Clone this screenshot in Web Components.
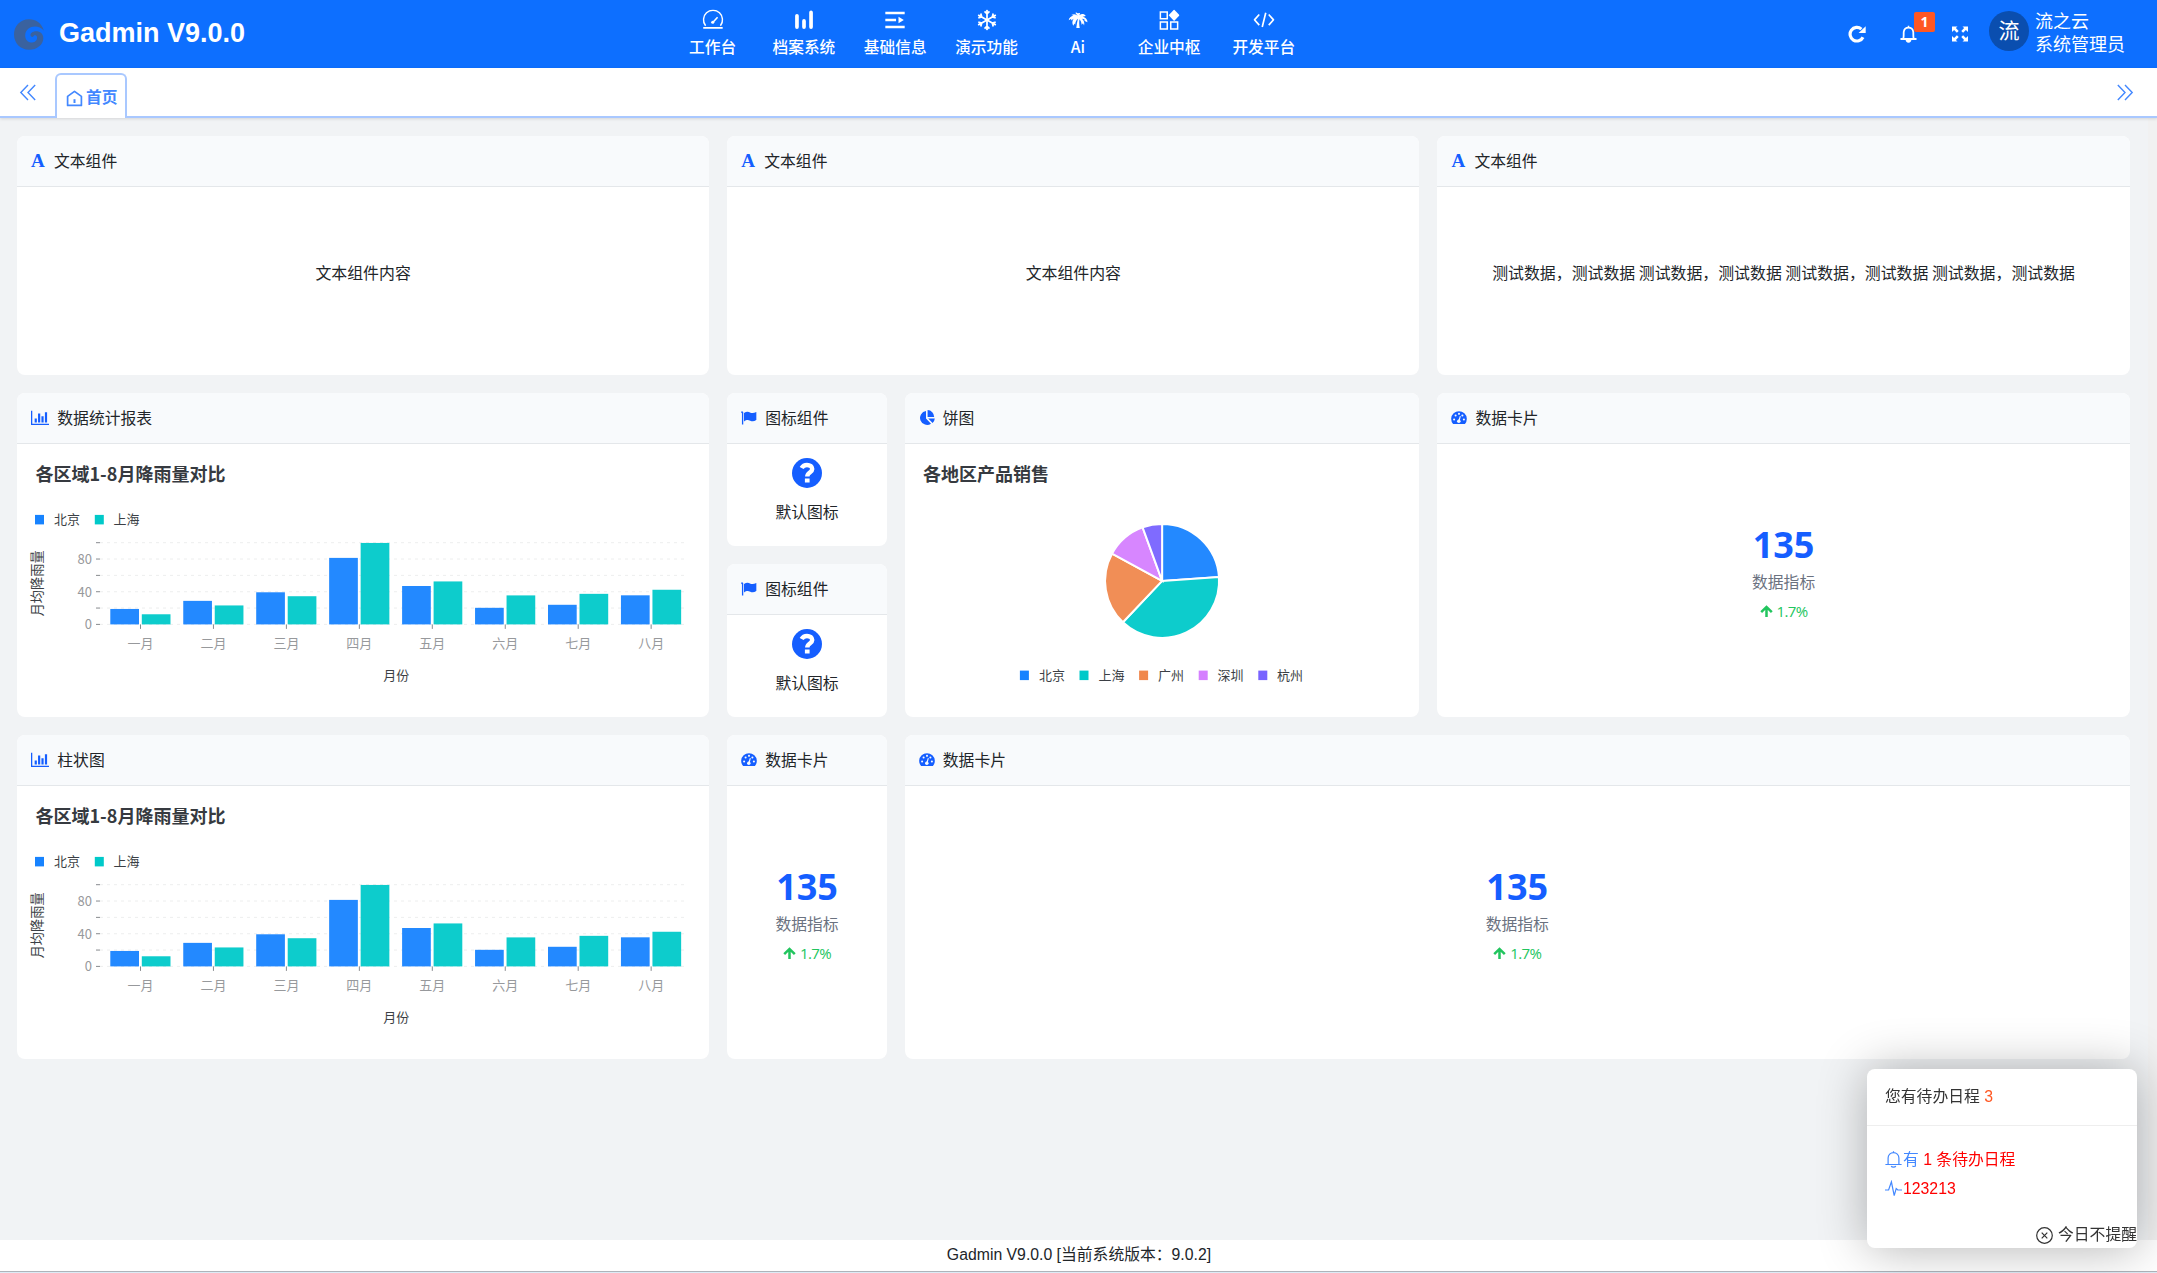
<!DOCTYPE html>
<html lang="zh-CN">
<head>
<meta charset="utf-8">
<title>Gadmin V9.0.0</title>
<style>
html,body{margin:0;height:100%;overflow:hidden}
body{font:16px/24px "Liberation Sans","Noto Sans CJK SC",sans-serif;color:#212529;background:#f1f3f5}
</style>
</head>
<body>
<g-app></g-app>
<script>
const CJK = '"Noto Sans CJK SC",sans-serif';
function define(name, render) {
  customElements.define(name, class extends HTMLElement {
    connectedCallback() {
      if (this.shadowRoot) return;
      this.attachShadow({ mode: 'open' }).innerHTML = render(this);
    }
  });
}
const line = (d, w = 2, x = '') => `<path d="${d}" fill="none" stroke="currentColor" stroke-width="${w}" ${x}/>`;
const fill = d => `<path d="${d}" fill="currentColor"/>`;
const flake = () => [0, 60, 120, 180, 240, 300].map(a => `<g transform="rotate(${a} 12 12)">${line('M12 12V.4M9.2 2.2 12 5 14.8 2.2', 2)}</g>`).join('');
const ICONS = {
  gauge: ['0 0 24 24', line('M3.6 18.5A10.8 10.8 0 1 1 20.4 18.5', 1.7) + line('M.9 21H23', 2) + line('M12 14.5 17.2 8.8', 1.8) + '<circle cx="11.7" cy="14.6" r="1.8" fill="currentColor"/>'],
  bars: ['0 0 24 24', line('M4 7.2V20M12 13V20M20 3.4V20', 4.2, 'stroke-linecap="round"')],
  indent: ['0 0 24 24', line('M1 4H23M1 12H13.2M1 20H23', 2.7) + fill('M16 8.2 22 12 16 15.8z')],
  snow: ['0 0 24 24', flake()],
  palm: ['0 0 24 24', fill('M12.6 8.2C10.8 5.4 7.2 4.4 4.4 6.4L6.8 6.8C4.2 7.6 1.6 9.2 1.5 12.2L4.3 10.5 4.2 12.7 7 10.6C5.2 13.3 5.2 16 6.6 18.6L8 15.9 8.8 17.5C9 14.2 10 12 12 10.6 11 14.2 10.4 18 10.1 21.2H14C13.3 17.5 13.2 14 13.7 11.2 15.2 13 16 15 16.1 17.5L17.7 15.7 18.9 18.2C19.8 15.1 18.6 12.4 16.4 10.6L19.2 11.2 19.6 13 22.7 14.6C22.9 11.3 20.6 8.8 17.2 8.2L20.8 7.4C19 4.9 16.1 4.7 13.7 6.5L14.4 4 11.6 4.4 9.5 3.3 9.4 4.5z')],
  blocks: ['0 0 24 24', line('M2.2 2.8H10V10.6H2.2zM2.2 14.4H10V22.2H2.2zM14 14.4H21.8V22.2H14z', 1.7) + fill('M17.8 0 24 6.6 17.8 13.2 11.6 6.6z')],
  code: ['0 0 24 24', line('M6.6 5.8 1.2 11.8 6.6 17.8M17.4 5.8 22.8 11.8 17.4 17.8M14 3.8 10 20', 1.9)],
  refresh: ['0 0 18 18', line('M15 12.2A6.8 6.8 0 1 1 13.4 4.1', 3.2) + fill('M17.7 1.2V8H10.6z')],
  bell: ['0 0 18 18', line('M3.4 14C4.4 11 3.6 9 4 6.5A5.05 5.05 0 0 1 14 6.5C14.4 9 13.6 11 14.6 14M.5 14.3H17.5', 1.9) + fill('M6 15.2H12A3 3 0 0 1 6 15.2zM8.2.2H9.8V2H8.2z')],
  full: ['0 0 16 16', fill('M0 .5H5.5L3.9 2.1 6.7 4.9 4.9 6.7 2.1 3.9 0 6zM16 .5H10.5L12.1 2.1 9.3 4.9 11.1 6.7 13.9 3.9 16 6zM0 15.5H5.5L3.9 13.9 6.7 11.1 4.9 9.3 2.1 12.1 0 10zM16 15.5H10.5L12.1 13.9 9.3 11.1 11.1 9.3 13.9 12.1 16 10z')],
  left: ['0 0 18 18', line('M9 1 1.4 9 9 17M16.6 1 9 9 16.6 17', 1.5)],
  right: ['0 0 18 18', line('M9 1 16.6 9 9 17M1.4 1 9 9 1.4 17', 1.5)],
  home: ['0 0 17 17', line('M1.6 6.4 8.5 1.4 15.4 6.4V15.4H1.6z', 1.7, 'stroke-linejoin="round"') + line('M8.5 9.2V13', 2)],
  chart: ['0 0 20 16', fill('M0 0H1.4V14.2H20V15.6H0zM4 8.6H6.4V13H4zM7.7 3.2H10.1V13H7.7zM11.4 6H13.8V13H11.4zM15.2 1.6H17.6V13H15.2z')],
  flag: ['0 0 17 16', fill('M.4 1.2A1.2 1.2 0 0 1 2.4 2.1V14.8H1V2.9A1.2 1.2 0 0 1 .4 1.2zM3.2 2.6C6 .9 8 1.3 10 2.3 12 3.2 13.8 2.9 16.3 1.6V10.2C14 11.6 12.2 12.1 9.8 10.9 7.6 9.9 5.8 9.9 3.2 11.6z')],
  pie: ['0 0 16 16', fill('M7 1V8.6L12 13.7A7 7 0 1 1 7 1zM8.6 0A7 7 0 0 1 15.2 7H8.6zM9.2 8.4H15.8A7 7 0 0 1 13.6 12.9z')],
  dash: ['0 0 17 16', '<path fill="currentColor" d="M2.2 14.4A8.3 8.3 0 1 1 14.8 14.4Z"/><g fill="#f8fafc"><circle cx="3.3" cy="9.6" r="1.1"/><circle cx="4.9" cy="5.4" r="1.1"/><circle cx="8.5" cy="3.6" r="1.1"/><circle cx="12.1" cy="5.4" r="1.1"/><circle cx="13.7" cy="9.6" r="1.1"/><circle cx="8.3" cy="11.4" r="1.9"/><path d="M7.7 11 9.4 5.8 10.4 6.1 9.2 11.2z"/></g>'],
  question: ['0 0 30 30', '<circle cx="15" cy="15" r="15" fill="#155eff"/><path d="M9.6 10C10.8 7.9 12.5 6.9 15 6.9 18 6.9 20.2 8.7 20.2 11.1 20.2 14.7 15.3 14.4 15.3 18.4" fill="none" stroke="#fff" stroke-width="4.5"/><path d="M12.9 20.4H17.6V24.6H12.9z" fill="#fff"/>'],
  up: ['0 0 13 12', line('M6.5 12V2M1.2 7.2 6.5 1.9 11.8 7.2', 2.5)],
  alarm: ['0 0 17 17', line('M3.1 13.3V7A5.4 5.4 0 0 1 13.9 7V13.3M.4 13.5H16.6M6.2 15A2.4 1.6 0 0 0 10.8 15M8.5.3V1.6', 1.2)],
  pulse: ['0 0 17 17', line('M0 10H3.6L6.4 1.8 9.2 15.6 11.2 8.6 12.8 10H17', 1.2)],
  close: ['0 0 17 17', line('M5.7 5.7 11.3 11.3M11.3 5.7 5.7 11.3', 1.2) + '<circle cx="8.5" cy="8.5" r="7.8" fill="none" stroke="currentColor" stroke-width="1.2"/>'],
  logo: ['0 0 30 31', fill('M29.8 11.5C27.4 3.8 21.6.2 15 .3 6 .5 0 7 0 15.6 0 24.4 6.6 30.8 15 30.8 23.2 30.8 29.3 25.6 29.3 19 29.3 14.8 26 12.2 22.2 12.2 18.4 12.2 15.9 14.4 16.6 16.8 17.2 18.4 19.4 18.3 20 16.6 20.4 15.8 22.4 16 22.9 17.6 23.8 20.6 21.4 23.4 18.2 23.6 14.2 23.8 11 20.6 11.2 16.2 11.5 10.6 16 7.6 21 7.6 24.4 7.6 27.4 9 29.8 11.5z')],
};
define('g-icon', el => {
  const n = el.getAttribute('name'), w = el.getAttribute('w') || 16, h = el.getAttribute('h') || w;
  return `<style>:host{display:block;flex:none;width:${w}px;height:${h}px}svg{display:block;width:100%;height:100%}
  b{display:block;font:bold 19px/16px "Liberation Serif",serif}</style>` +
    (n === 'font' ? '<b>A</b>' : `<svg viewBox="${ICONS[n][0]}">${ICONS[n][1]}</svg>`);
});

define('g-nav-item', el => `<style>
:host{display:flex;flex-direction:column;align-items:center;width:${el.getAttribute('w') || 91.3}px;padding-top:8px;font:500 15.7px/24px ${CJK};color:#fff}
span{margin-top:3px}</style><g-icon name="${el.getAttribute('icon')}" w="24" style="transform:scale(.88)"></g-icon><span><slot></slot></span>`);

define('g-header', () => `<style>
:host{display:flex;height:68px;background:#0d6fff;color:#fff;justify-content:space-between}
.brand{display:flex;align-items:center;width:653px;padding-left:14px;gap:15px}
.brand g-icon{color:#3a629f}.brand strong{font:bold 27px/40px "Liberation Sans";margin-bottom:3px}
nav{display:flex;flex:1}
.tools{display:flex;width:309px}
.ic{padding-top:25px}
.bell{position:relative;margin-left:34px}
.badge{position:absolute;left:14px;top:12px;width:21px;height:20px;border-radius:2px;background:#ff5722;font:bold 14px/20px "Open Sans";text-align:center}
.full{margin-left:35px;padding-top:26px}
.avatar{width:40px;height:40px;border-radius:50%;background:#0a4eaf;margin:11px 6px 0 21px;font:21px/37px ${CJK};text-align:center}
.who{font:18px/23px ${CJK};padding-top:9px;white-space:nowrap}
</style>
<div class="brand"><g-icon name="logo" w="30" h="31"></g-icon><strong>Gadmin V9.0.0</strong></div>
<nav><g-nav-item icon="gauge">工作台</g-nav-item><g-nav-item icon="bars">档案系统</g-nav-item><g-nav-item icon="indent">基础信息</g-nav-item><g-nav-item icon="snow">演示功能</g-nav-item><g-nav-item icon="palm">Ai</g-nav-item><g-nav-item icon="blocks">企业中枢</g-nav-item><g-nav-item icon="code" w="98">开发平台</g-nav-item></nav>
<div class="tools"><div class="ic"><g-icon name="refresh" w="18"></g-icon></div>
<div class="ic bell"><g-icon name="bell" w="17" h="18"></g-icon><span class="badge">1</span></div>
<div class="full"><g-icon name="full" w="16"></g-icon></div>
<div class="avatar">流</div><div class="who">流之云<br>系统管理员</div></div>`);

define('g-tabs', () => `<style>
:host{display:flex;box-sizing:border-box;height:50px;background:#fff;border-bottom:2px solid #a9c8ff;box-shadow:0 1px 3px rgba(0,0,0,.12);color:#4388ff;align-items:flex-end;position:relative}
.l{padding:0 18px 15px 19px}.r{margin-left:auto;padding:0 23px 15px 0}
.tab{display:flex;box-sizing:border-box;width:72px;height:45px;margin-bottom:-2px;border:2px solid #a9c8ff;border-bottom:0;border-radius:6px 6px 0 0;background:#fff;padding:3px 0 0 9px;gap:3px;align-items:center;font:bold 15.7px/24px ${CJK};white-space:nowrap}
.tab span{margin-top:-2px}
</style><div class="l"><g-icon name="left" w="18" h="17"></g-icon></div><div class="tab"><g-icon name="home" w="17"></g-icon><span>首页</span></div><div class="r"><g-icon name="right" w="18" h="17"></g-icon></div>`);

define('g-card', el => `<style>
:host{display:flex;flex-direction:column;min-width:0;min-height:0;background:#fff;border-radius:8px;overflow:hidden;grid-column:${el.getAttribute('col')};grid-row:${el.getAttribute('row')}}
header{display:flex;align-items:center;gap:8px;box-sizing:border-box;height:51px;flex:none;padding-left:14px;background:#f8fafc;border-bottom:1px solid #e4e7ea;font:15.8px/24px ${CJK};white-space:nowrap}
header g-icon{color:#155eff}
.body{flex:1;min-height:0;display:flex;flex-direction:column}
</style><header><g-icon name="${el.getAttribute('icon')}" w="${el.getAttribute('iw') || 16}" h="16"></g-icon><span>${el.getAttribute('label')}</span></header><div class="body"><slot></slot></div>`);

define('g-text', () => `<style>:host{display:flex;flex:1;align-items:center;justify-content:center;padding-bottom:15.5px;font:15.9px/24px ${CJK};white-space:nowrap}</style><span><slot></slot></span>`);

define('g-mark', () => `<style>:host{display:flex;flex-direction:column;align-items:center;padding-top:14.2px;font:15.8px/24px ${CJK}}span{margin-top:12.7px}</style><g-icon name="question" w="30"></g-icon><span>默认图标</span>`);

define('g-metric', () => `<style>:host{display:flex;flex:1;flex-direction:column;align-items:center;padding-top:79.4px;font:15.8px/24px ${CJK}}
b{font:bold 36px/44px "Open Sans";color:#155eff}span{color:#6b7280;margin-top:2.8px}
.t{display:flex;align-items:center;gap:4px;font:15px/24px "Open Sans";letter-spacing:-.6px;color:#22c55e;margin-top:5px}</style>
<b>135</b><span>数据指标</span><div class="t"><g-icon name="up" w="13" h="12"></g-icon>1.7%</div>`);

const CHART = `:host{display:block}svg{display:block}text{font:13px ${CJK};fill:#3b3f45}.h{font-weight:bold;font-size:18px;fill:#363a40}.a{fill:#97999c}`;
define('g-bars', () => {
  const A = [18.9, 28.8, 39.3, 81.4, 47, 20.3, 24, 35.6], B = [12.4, 23.2, 34.5, 99.7, 52.6, 35.5, 37.4, 42.4];
  const M = '一二三四五六七八';
  let s = '';
  for (let v = 0; v <= 100; v += 20) {
    const y = 624 - v * .817;
    s += `<path d="M100 ${y}H687" stroke="#1d2129" stroke-opacity=".1" stroke-width=".8" stroke-dasharray="3 4"/><path d="M96 ${y}H100" stroke="#888b8f"/>`;
    if (v % 40 === 0) s += `<text class="a" x="92" y="${y + 4.8}" text-anchor="end">${v}</text>`;
  }
  A.forEach((v, i) => {
    const c = 140.5 + i * 72.95;
    s += `<path d="M${c} 624v4.5" stroke="#888b8f"/><rect x="${c - 30.2}" y="${624 - v * .817}" width="28.7" height="${v * .817}" fill="#1783ff" opacity=".95"/><rect x="${c + 1.3}" y="${624 - B[i] * .817}" width="28.7" height="${B[i] * .817}" fill="#00c9c9" opacity=".95"/><text class="a" x="${c}" y="647.4" text-anchor="middle">${M[i]}月</text>`;
  });
  return `<style>${CHART}</style><svg width="692" height="272" viewBox="17 443.6 692 272"><text class="h" x="35.5" y="480.7">各区域1-8月降雨量对比</text>
  <rect x="35" y="514.5" width="9" height="9.5" fill="#1783ff"/><text x="54" y="523.6">北京</text><rect x="94.8" y="514.5" width="9" height="9.5" fill="#00c9c9"/><text x="113.5" y="523.6">上海</text>
  ${s}<text x="396.2" y="679.4" text-anchor="middle">月份</text><text transform="translate(41.7 583) rotate(-90)" text-anchor="middle" style="font-size:13.2px">月均降雨量</text></svg>`;
});
define('g-pie', () => {
  const C = ['#1783ff', '#00c9c9', '#f0884d', '#d580ff', '#7863ff'], E = [0, 86.1, 223.4, 298.5, 340, 360], N = ['北京', '上海', '广州', '深圳', '杭州'];
  const p = a => { const r = a * Math.PI / 180; return (1162 + 57 * Math.sin(r)).toFixed(2) + ' ' + (580.5 - 57 * Math.cos(r)).toFixed(2); };
  return `<style>${CHART}</style><svg width="514" height="272" viewBox="904.9 443.6 514 272"><text class="h" x="923" y="480.7">各地区产品销售</text>` +
    C.map((c, i) => `<path d="M1162 580.5L${p(E[i])}A57 57 0 0 1 ${p(E[i + 1])}Z" fill="${c}" fill-opacity=".95" stroke="#fff" stroke-width="2"/><rect x="${1019.8 + i * 59.6}" y="670.2" width="9" height="9.5" fill="${c}"/><text x="${1039 + i * 59.5}" y="679.4">${N[i]}</text>`).join('') + '</svg>';
});

define('g-notice', () => `<style>
:host{position:fixed;left:1867px;top:1069px;width:270px;height:179px;border-radius:8px;background:#fff;box-shadow:1px 1px 50px rgba(0,0,0,.3);display:flex;flex-direction:column;font:15.8px/24px "Liberation Sans",${CJK};color:#333;white-space:nowrap}
header{padding:16px 18px 16px;border-bottom:1px solid #eee}em{font-style:normal;color:#ff5722}
.row{display:flex;align-items:center;gap:1px;height:29px;padding-left:18px;color:#4388ff}.row span{color:red}
.list{padding-top:19px}.foot{display:flex;align-items:center;justify-content:flex-end;gap:5px;margin-top:auto;padding-bottom:1px}
</style><header>您有待办日程 <em>3</em></header>
<div class="list"><div class="row"><g-icon name="alarm" w="17"></g-icon><div>有 <span>1 条待办日程</span></div></div><div class="row"><g-icon name="pulse" w="17"></g-icon><span>123213</span></div></div>
<div class="foot"><g-icon name="close" w="17"></g-icon><span>今日不提醒</span></div>`);

define('g-app', () => `<style>
:host{display:flex;flex-direction:column;height:1273px;overflow:hidden}
main{flex:1;display:grid;align-content:start;grid-template-columns:repeat(12,1fr);grid-auto-rows:67.5px;gap:18px;padding:18px 18.3px 0 17px;border-right:9px solid #f1f1f1}
footer{height:31px;background:#fff;text-align:center;font-size:15.8px;line-height:29px;padding-left:1px;border-bottom:1px solid #aeb4ba;box-shadow:0 1px #dcebf5;margin-bottom:1px}
</style><g-header></g-header><g-tabs></g-tabs>
<main>
<g-card col="1/5" row="1/4" icon="font" iw="15" label="文本组件"><g-text>文本组件内容</g-text></g-card>
<g-card col="5/9" row="1/4" icon="font" iw="15" label="文本组件"><g-text>文本组件内容</g-text></g-card>
<g-card col="9/13" row="1/4" icon="font" iw="15" label="文本组件"><g-text>测试数据，测试数据 测试数据，测试数据 测试数据，测试数据 测试数据，测试数据</g-text></g-card>
<g-card col="1/5" row="4/8" icon="chart" iw="18.3" label="数据统计报表"><g-bars></g-bars></g-card>
<g-card col="5/6" row="4/6" icon="flag" label="图标组件"><g-mark></g-mark></g-card>
<g-card col="5/6" row="6/8" icon="flag" label="图标组件"><g-mark></g-mark></g-card>
<g-card col="6/9" row="4/8" icon="pie" label="饼图"><g-pie></g-pie></g-card>
<g-card col="9/13" row="4/8" icon="dash" label="数据卡片"><g-metric></g-metric></g-card>
<g-card col="1/5" row="8/12" icon="chart" iw="18.3" label="柱状图"><g-bars></g-bars></g-card>
<g-card col="5/6" row="8/12" icon="dash" label="数据卡片"><g-metric></g-metric></g-card>
<g-card col="6/13" row="8/12" icon="dash" label="数据卡片"><g-metric></g-metric></g-card>
</main>
<footer>Gadmin V9.0.0 [当前系统版本：9.0.2]</footer><g-notice></g-notice>`);
</script>
</body>
</html>
